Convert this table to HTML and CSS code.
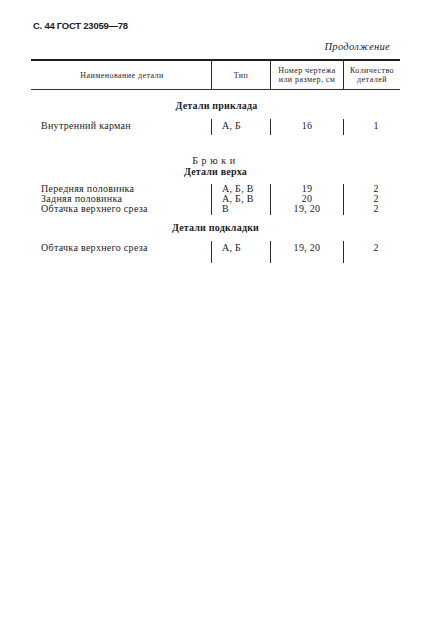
FILE: index.html
```html
<!DOCTYPE html>
<html lang="ru">
<head>
<meta charset="utf-8">
<link rel="stylesheet" href="styles.css">
</head>
<body>
<div class="page">
  <div class="running-head">С. 44 ГОСТ 23059—78</div>
  <div class="cont">Продолжение</div>
  <div class="thead">
    <div class="th th-name">Наименование детали</div>
    <div class="th th-type">Тип</div>
    <div class="th th-num">Номер чертежа<br>или размер, см</div>
    <div class="th th-qty">Количество<br>деталей</div>
  </div>

  <div class="title t1">Детали приклада</div>
  <div class="group g1">
    <div class="c c-name">Внутренний карман</div>
    <div class="c c-type">А, Б</div>
    <div class="c c-num">16</div>
    <div class="c c-qty">1</div>
  </div>

  <div class="chapter">Брюки</div>
  <div class="title t2">Детали верха</div>
  <div class="group g2">
    <div class="c c-name">Передняя половинка<br>Задняя половинка<br>Обтачка верхнего среза</div>
    <div class="c c-type">А, Б, В<br>А, Б, В<br>В</div>
    <div class="c c-num">19<br>20<br>19, 20</div>
    <div class="c c-qty">2<br>2<br>2</div>
  </div>

  <div class="title t3">Детали подкладки</div>
  <div class="group g3">
    <div class="c c-name">Обтачка верхнего среза</div>
    <div class="c c-type">А, Б</div>
    <div class="c c-num">19, 20</div>
    <div class="c c-qty">2</div>
  </div>
</div>
</body>
</html>
```

FILE: styles.css
```css
html, body {
  margin: 0;
  padding: 0;
  background: #ffffff;
}
body {
  font-family: "Liberation Serif", "Times New Roman", serif;
  color: #1c1c1c;
  width: 428px;
  height: 634px;
  overflow: hidden;
}
.page {
  width: 369px;
  margin-left: 31px;
  display: flex;
  flex-direction: column;
}
.running-head {
  margin-top: 20px;
  margin-left: 2px;
  height: 12px;
  line-height: 12px;
  font-family: "Liberation Sans", Arial, sans-serif;
  font-weight: bold;
  font-size: 9.5px;
  letter-spacing: -0.25px;
}
.cont {
  margin-top: 9px;
  height: 12px;
  line-height: 12px;
  text-align: right;
  padding-right: 10px;
  font-style: italic;
  font-size: 10.5px;
  letter-spacing: 0.3px;
}
.thead {
  margin-top: 6px;
  display: grid;
  grid-template-columns: 180px 59px 73px 57px;
  height: 28px;
  border-top: 2px solid #1e1e1e;
  border-bottom: 1.5px solid #333;
}
.th {
  display: flex;
  align-items: center;
  justify-content: center;
  text-align: center;
  font-size: 8px;
  line-height: 9px;
  letter-spacing: 0.45px;
}
.th-type, .th-num, .th-qty {
  border-left: 1px solid #2a2a2a;
}
.th-name { padding-left: 2px; }
.title {
  text-align: center;
  font-weight: bold;
  font-size: 10px;
  line-height: 11px;
  height: 11px;
  letter-spacing: 0.2px;
}
.t1 { margin-top: 10px; margin-left: 2px; }
.chapter {
  margin-top: 20px;
  text-align: center;
  font-size: 10px;
  line-height: 11px;
  height: 11px;
  letter-spacing: 3.6px;
}
.t2 { margin-top: 0; }
.t3 { margin-top: 7.5px; }
.group {
  display: grid;
  grid-template-columns: 180px 59px 73px 57px;
  font-size: 10px;
  line-height: 10px;
}
.c-type, .c-num, .c-qty {
  border-left: 1px solid #2a2a2a;
}
.c-name {
  padding-left: 10px;
  letter-spacing: 0.3px;
}
.c-type {
  padding-left: 10px;
  letter-spacing: 0.3px;
}
.c-num {
  text-align: center;
  letter-spacing: 0.3px;
}
.c-qty {
  text-align: center;
  padding-left: 8px;
}
.g1 {
  margin-top: 6px;
  padding-top: 2px;
  height: 18px;
  box-sizing: border-box;
}
.g1 .c { padding-top: 2px; }
.g2 {
  margin-top: 6.5px;
  height: 31px;
}
.g3 {
  margin-top: 7.5px;
  height: 22px;
}
.g3 .c { padding-top: 2px; }
```
